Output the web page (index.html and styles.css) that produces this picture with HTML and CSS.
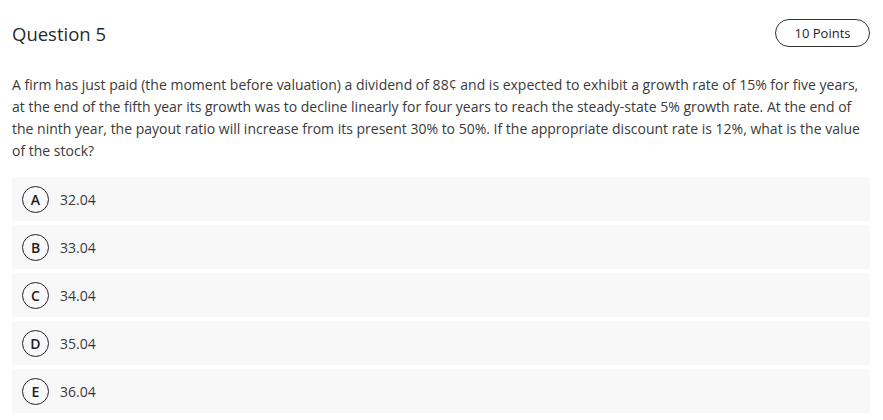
FILE: index.html
```html
<!DOCTYPE html>
<html>
<head>
<meta charset="utf-8">
<link rel="stylesheet" href="styles.css">
</head>
<body>
<div class="question">
  <div class="header">
    <h2 class="title">Question 5</h2>
    <span class="points">10 Points</span>
  </div>
  <p class="prompt">A firm has just paid (the moment before valuation) a dividend of 88¢ and is expected to exhibit a growth rate of 15% for five years, at the end of the fifth year its growth was to decline linearly for four years to reach the steady-state 5% growth rate. At the end of the ninth year, the payout ratio will increase from its present 30% to 50%. If the appropriate discount rate is 12%, what is the value of the stock?</p>
  <div class="options">
    <div class="option"><span class="letter">A</span><span class="value">32.04</span></div>
    <div class="option"><span class="letter">B</span><span class="value">33.04</span></div>
    <div class="option"><span class="letter">C</span><span class="value">34.04</span></div>
    <div class="option"><span class="letter">D</span><span class="value">35.04</span></div>
    <div class="option"><span class="letter">E</span><span class="value">36.04</span></div>
  </div>
</div>
</body>
</html>
```
FILE: styles.css
```css
html, body {
  margin: 0;
  padding: 0;
  background: #ffffff;
}
body {
  font-family: "Open Sans", "Noto Sans", sans-serif;
  color: #333333;
}
.question {
  padding: 18px 13px 0 12px;
}
.header {
  display: flex;
  justify-content: space-between;
  align-items: center;
  height: 30px;
}
.title {
  margin: 0;
  font-size: 18.5px;
  font-weight: 400;
  color: #2a2a2a;
}
.points {
  display: inline-flex;
  align-items: center;
  justify-content: center;
  box-sizing: border-box;
  width: 95px;
  height: 28px;
  border: 1px solid #333333;
  border-radius: 14px;
  font-size: 13px;
  color: #222222;
}
.prompt {
  margin: 26px 0 0 0;
  font-size: 14px;
  line-height: 22px;
  color: #3a3a3a;
}
.options {
  margin-top: 15px;
  display: flex;
  flex-direction: column;
  gap: 4px;
}
.option {
  display: flex;
  align-items: center;
  height: 44px;
  padding-left: 10px;
  background: #f8f8f8;
  border-radius: 2px;
}
.letter {
  display: inline-flex;
  align-items: center;
  justify-content: center;
  box-sizing: border-box;
  width: 27px;
  height: 27px;
  border: 1.5px solid #222222;
  border-radius: 50%;
  font-size: 14px;
  font-weight: 600;
  color: #222222;
}
.value {
  margin-left: 11px;
  font-size: 14px;
  color: #3a3a3a;
}
```
